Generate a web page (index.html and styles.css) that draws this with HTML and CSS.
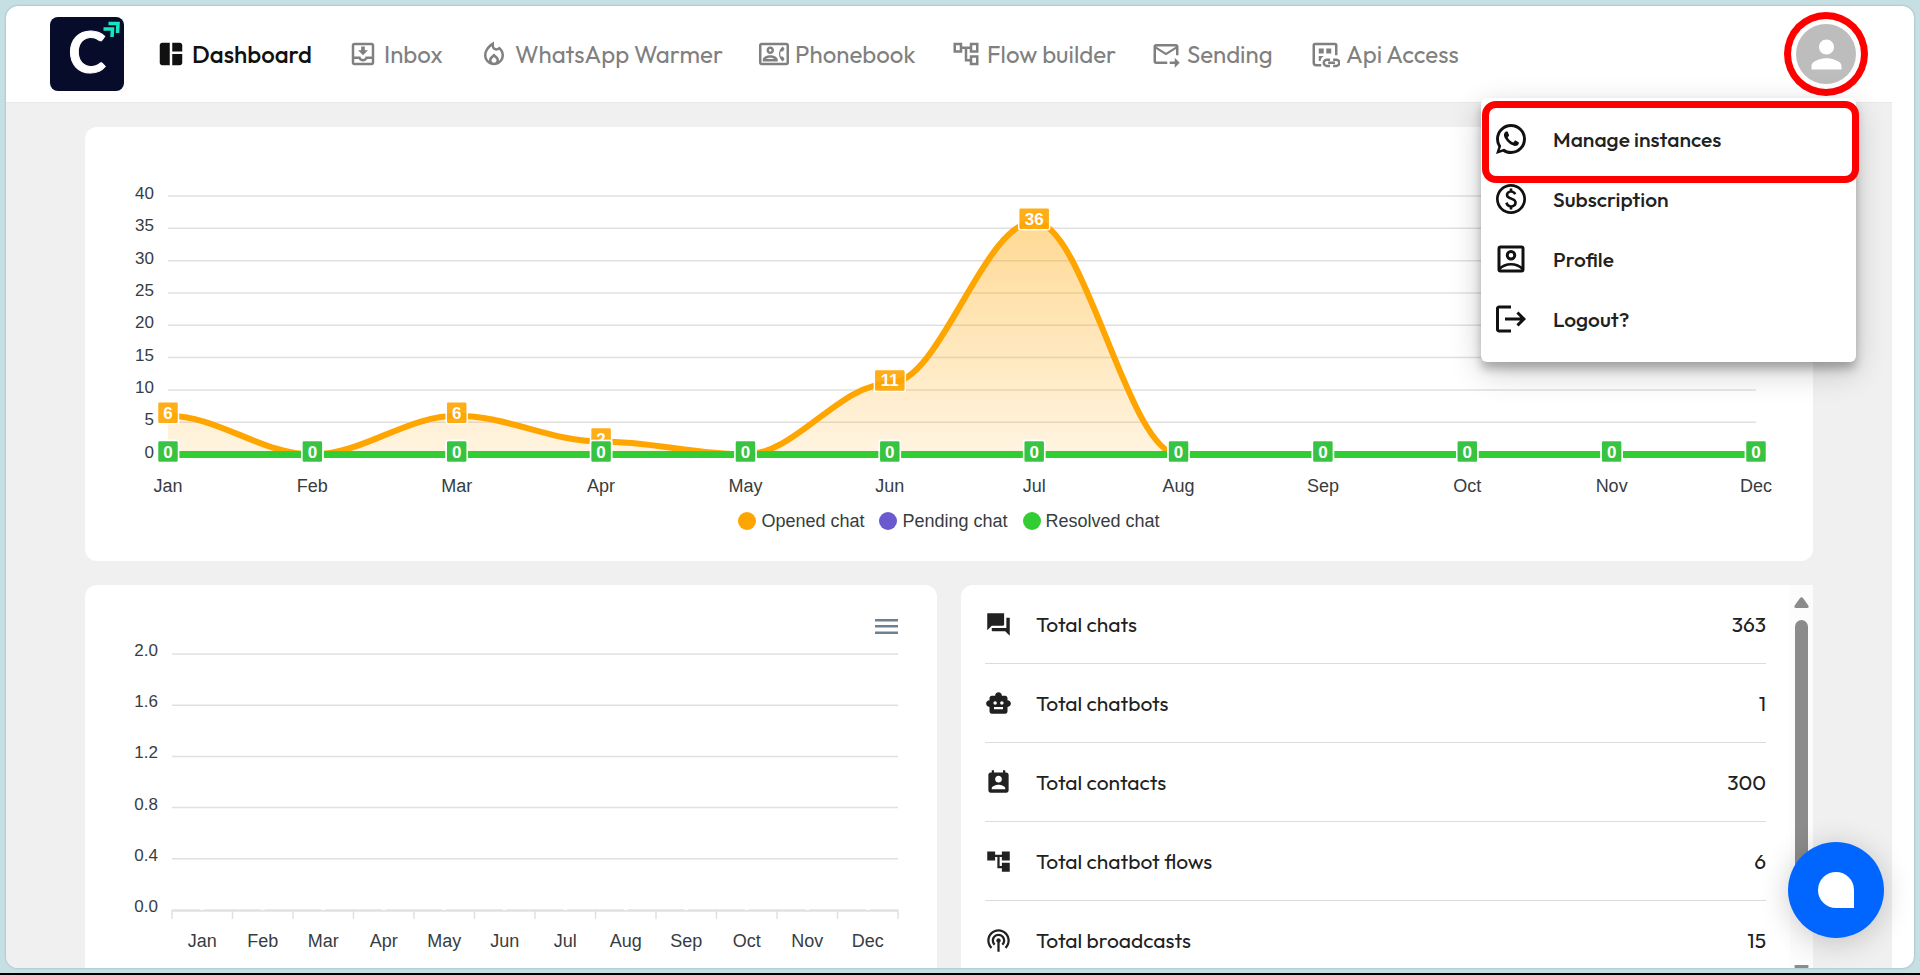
FILE: index.html
```html
<!DOCTYPE html>
<html lang="en">
<head>
<meta charset="utf-8">
<meta name="viewport" content="width=device-width, initial-scale=1">
<title>Dashboard</title>
<link rel="stylesheet" href="styles.css">
</head>
<body>
<div class="frame">
  <header class="topbar">
    <a class="logo" href="#" aria-label="Home">
      <svg viewBox="0 0 74 74" width="74" height="74">
        <rect width="74" height="74" rx="8" fill="#060c2a"/>
        <text x="37" y="56" text-anchor="middle" class="logo-letter">C</text>
        <path d="M58.500 6.500h9.500l-.5 9.500M53.500 12h9l-.5 8" fill="none" stroke="#16e5c0" stroke-width="3.600"/>
      </svg>
    </a>
    <nav class="nav">
      <a class="nav-link active" href="#"><svg class="nav-icon" viewBox="0 0 24 24"><path d="M11 21H5c-1.1 0-2-.9-2-2V5c0-1.1.9-2 2-2h6v18zm2 0h6c1.100 0 2-.9 2-2v-7h-8v9zm8-11V5c0-1.100-.9-2-2-2h-6v7h8z"/></svg>Dashboard</a>
      <a class="nav-link" href="#"><svg class="nav-icon" viewBox="0 0 24 24"><path d="M16 9h-2.550V6h-2.900v3H8l4 4zm3-6H4.990C3.880 3 3 3.900 3 5v14c0 1.100.88 2 1.990 2H19c1.100 0 2-.9 2-2V5c0-1.100-.9-2-2-2zm0 16H5v-3h3.560c.69 1.190 1.970 2 3.450 2s2.750-.81 3.450-2H19v3zm0-5h-4.990c0 1.100-.9 2-2 2s-2-.9-2-2H5V5h14v9z"/></svg>Inbox</a>
      <a class="nav-link" href="#"><svg class="nav-icon" viewBox="0 0 24 24"><path d="M16 6l-.44.55c-.42.52-.98.75-1.540.75C13 7.300 12 6.520 12 5.300V2S4 6 4 13c0 4.420 3.580 8 8 8s8-3.580 8-8c0-2.960-1.610-5.620-4-7zm-4 13c-1.100 0-2-.87-2-1.940 0-.51.2-.99.58-1.360L12 14.300l1.430 1.400c.37.37.57.85.57 1.360 0 1.070-.9 1.940-2 1.940zm3.960-1.500c.04-.36.22-1.890-1.130-3.220L12 11.500l-2.830 2.780C7.810 15.620 8 17.160 8.040 17.500 6.790 16.400 6 14.790 6 13c0-3.160 2.130-5.650 4.030-7.250.23 1.990 1.930 3.550 3.990 3.550.78 0 1.540-.23 2.180-.66C17.340 9.780 18 11.350 18 13c0 1.790-.79 3.400-2.040 4.500z"/></svg>WhatsApp Warmer</a>
      <a class="nav-link" href="#"><svg class="nav-icon" viewBox="0 0 24 24"><path d="M22 3H2C.9 3 0 3.900 0 5v14c0 1.100.9 2 2 2h20c1.100 0 1.990-.9 1.990-2L24 5c0-1.100-.9-2-2-2zm0 16H2V5h20v14zM19.010 18 20.500 16.010 19.010 14.020h-1.640C17.130 13.300 17 12.660 17 12s.13-1.350.37-2h1.640l1.500-1.990L19.010 6c-1.310.98-2.280 2.370-2.730 3.990-.18.64-.28 1.310-.28 2.010s.1 1.370.28 2.010c.45 1.610 1.420 3.010 2.730 3.990zM9 12c1.650 0 3-1.350 3-3s-1.350-3-3-3-3 1.350-3 3 1.350 3 3 3zm0-4c.55 0 1 .45 1 1s-.45 1-1 1-1-.45-1-1 .45-1 1-1zm6 8.590c0-2.500-3.970-3.580-6-3.580s-6 1.080-6 3.580V18h12v-1.410zM5.480 16c.74-.5 2.220-1 3.520-1 1.300 0 2.770.49 3.520 1H5.480z"/></svg>Phonebook</a>
      <a class="nav-link" href="#"><svg class="nav-icon" viewBox="0 0 24 24"><path d="M22 11V3h-7v3H9V3H2v8h7V8h2v10h4v3h7v-8h-7v3h-2V8h2v3h7zM7 9H4V5h3v4zm10 6h3v4h-3v-4zm0-10h3v4h-3V5z"/></svg>Flow builder</a>
      <a class="nav-link" href="#"><svg class="nav-icon" viewBox="0 0 24 24"><path d="M20 4H4c-1.100 0-1.990.9-1.990 2L2 18c0 1.100.9 2 2 2h9v-2H4V8l8 5 8-5v5h2V6c0-1.100-.9-2-2-2zm-8 7L4 6h16l-8 5zm7 4 4 4-4 4v-3h-4v-2h4v-3z"/></svg>Sending</a>
      <a class="nav-link" href="#"><svg class="nav-icon" viewBox="0 0 24 24"><g fill="none" stroke="currentColor" stroke-width="2"><path d="M9 21H5a2 2 0 0 1-2-2V5a1 1 0 0 1 1-1h16a1 1 0 0 1 1 1v8"/><path d="M16 16.500h-2.500a2.500 2.500 0 0 0 0 5H16M18.500 16.500H21a2.500 2.500 0 0 1 0 5h-2.500M14.500 19h5.500"/></g><path d="M7 7.500h4V11.500H7zM13 7.500h4V11.500h-4zM7 13.500h4c-1.500 1-2.500 2.200-2.500 4H7z"/></svg>Api Access</a>
    </nav>
    <div class="account">
      <button class="avatar" type="button" aria-label="Account menu"><svg viewBox="0 0 24 24" width="45" height="45"><path d="M12 12c2.210 0 4-1.790 4-4s-1.790-4-4-4-4 1.790-4 4 1.790 4 4 4zm0 2c-2.670 0-8 1.340-8 4v2h16v-2c0-2.660-5.330-4-8-4z"/></svg></button>
      <div class="menu">
        <button class="menu-item" type="button"><svg class="menu-icon" viewBox="0 0 24 24"><path d="M16.750 13.960c.25.13.41.2.46.3.06.11.04.61-.21 1.180-.2.56-1.240 1.100-1.700 1.120-.46.02-.47.36-2.960-.73-2.490-1.090-3.990-3.750-4.110-3.920-.12-.17-.96-1.380-.92-2.610.05-1.220.69-1.800.95-2.040.24-.26.51-.29.68-.26h.47c.15 0 .36-.06.55.45l.69 1.870c.06.13.1.28.01.44l-.27.41-.39.42c-.12.12-.26.25-.12.5.12.26.62 1.090 1.320 1.780.91.88 1.710 1.170 1.950 1.300.24.14.39.12.54-.04l.81-.94c.19-.25.35-.19.58-.11l1.670.88M12 2a10 10 0 0 1 10 10 10 10 0 0 1-10 10c-1.970 0-3.800-.57-5.350-1.550L2 22l1.550-4.650A9.969 9.969 0 0 1 2 12 10 10 0 0 1 12 2m0 2a8 8 0 0 0-8 8c0 1.720.54 3.310 1.460 4.610L4.500 19.500l2.890-.96A7.950 7.950 0 0 0 12 20a8 8 0 0 0 8-8 8 8 0 0 0-8-8z"/></svg>Manage instances</button>
        <button class="menu-item" type="button"><svg class="menu-icon" viewBox="0 0 24 24"><path d="M12 2C6.480 2 2 6.480 2 12s4.480 10 10 10 10-4.480 10-10S17.520 2 12 2zm0 18.200c-4.500 0-8.200-3.700-8.200-8.200S7.500 3.800 12 3.800s8.200 3.700 8.200 8.200-3.700 8.200-8.200 8.200zm.89-9.100c-1.780-.59-2.640-.96-2.640-1.900 0-1.020 1.110-1.390 1.810-1.390 1.310 0 1.790.99 1.900 1.340l1.580-.67c-.15-.44-.82-1.910-2.660-2.230V5h-1.750v1.260c-2.600.56-2.620 2.850-2.620 2.960 0 2.270 2.250 2.910 3.350 3.310 1.580.56 2.280 1.070 2.280 2.030 0 1.130-1.050 1.610-1.980 1.610-1.820 0-2.340-1.870-2.400-2.090l-1.660.67c.63 2.190 2.280 2.780 3.020 2.960V19h1.750v-1.240c.52-.09 3.020-.59 3.020-3.220.01-1.390-.6-2.610-3-3.440z"/></svg>Subscription</button>
        <button class="menu-item" type="button"><svg class="menu-icon" viewBox="0 0 24 24"><g fill="none" stroke="currentColor" stroke-width="2"><rect x="4" y="4" width="16" height="16" rx="1"/><circle cx="12" cy="9.500" r="2.500"/><path d="M4 18.800c4.500-4.400 11.500-4.400 16 0" stroke-width="1.800"/></g></svg>Profile</button>
        <button class="menu-item" type="button"><svg class="menu-icon" viewBox="0 0 24 24"><path d="M17 7l-1.410 1.410L18.170 11H8v2h10.170l-2.580 2.580L17 17l5-5zM4 5h8V3H4c-1.100 0-2 .9-2 2v14c0 1.100.9 2 2 2h8v-2H4V5z"/></svg>Logout?</button>
      </div>
    </div>
  </header>

  <main class="content">
    <section class="card chats-card">
      <svg id="chats-chart" class="chart" viewBox="0 0 1728 376" role="img" aria-label="Chats by month"></svg>
      <ul class="legend">
        <li class="legend-item"><span class="dot opened"></span>Opened chat</li>
        <li class="legend-item"><span class="dot pending"></span>Pending chat</li>
        <li class="legend-item"><span class="dot resolved"></span>Resolved chat</li>
      </ul>
    </section>

    <div class="columns">
      <section class="card">
        <div class="chart-tools">
          <button class="chart-menu" type="button" aria-label="Chart menu"><svg viewBox="0 0 23 15" width="23" height="15"><path d="M0 0h23v2.500H0zM0 6h23v2.500H0zM0 12.500h23V15H0z"/></svg></button>
        </div>
        <svg id="flow-chart" class="chart" viewBox="0 0 852 330" role="img" aria-label="Monthly totals"></svg>
      </section>

      <section class="card stats-card">
        <ul class="stats">
          <li class="stat"><svg class="stat-icon" viewBox="0 0 24 24"><path d="M22 6h-3v9H6v2c0 .55.45 1 1 1h11l4 4V6zm-5 6V2H2v15l4-4h10c.55 0 1-.45 1-1z"/></svg><span>Total chats</span><span class="stat-value">363</span></li>
          <li class="stat"><svg class="stat-icon" viewBox="0 0 24 24"><path d="M20 9V7c0-1.100-.9-2-2-2h-3c0-1.660-1.340-3-3-3S9 3.340 9 5H6c-1.100 0-2 .9-2 2v2c-1.660 0-3 1.340-3 3s1.340 3 3 3v4c0 1.100.9 2 2 2h12c1.100 0 2-.9 2-2v-4c1.660 0 3-1.340 3-3s-1.340-3-3-3zM7.500 11.500c0-.83.67-1.500 1.500-1.500s1.500.67 1.500 1.500S9.830 13 9 13s-1.500-.67-1.500-1.500zM16 17H8v-2h8v2zm-1-4c-.83 0-1.500-.67-1.500-1.500S14.170 10 15 10s1.500.67 1.500 1.500S15.830 13 15 13z"/></svg><span>Total chatbots</span><span class="stat-value">1</span></li>
          <li class="stat"><svg class="stat-icon" viewBox="0 0 24 24"><path d="M19 3h-1V1h-2v2H8V1H6v2H5c-1.110 0-2 .9-2 2v14c0 1.100.89 2 2 2h14c1.100 0 2-.9 2-2V5c0-1.100-.9-2-2-2zm-7 3c1.660 0 3 1.340 3 3s-1.340 3-3 3-3-1.340-3-3 1.340-3 3-3zm6 12H6v-1c0-2 4-3.100 6-3.100s6 1.100 6 3.100v1z"/></svg><span>Total contacts</span><span class="stat-value">300</span></li>
          <li class="stat"><svg class="stat-icon" viewBox="0 0 24 24"><path d="M22 11V3h-7v3H9V3H2v8h7V8h2v10h4v3h7v-8h-7v3h-2V8h2v3z"/></svg><span>Total chatbot flows</span><span class="stat-value">6</span></li>
          <li class="stat"><svg class="stat-icon" viewBox="0 0 24 24"><path d="M14 12c0 .74-.4 1.380-1 1.720V22h-2v-8.280c-.6-.35-1-.98-1-1.720 0-1.100.9-2 2-2s2 .9 2 2zm-2-6c-3.310 0-6 2.690-6 6 0 1.740.75 3.310 1.940 4.400l1.420-1.420C8.530 14.250 8 13.190 8 12c0-2.210 1.790-4 4-4s4 1.790 4 4c0 1.190-.53 2.250-1.360 2.980l1.420 1.420C17.250 15.310 18 13.740 18 12c0-3.310-2.690-6-6-6zm0-4C6.480 2 2 6.480 2 12c0 2.850 1.200 5.410 3.110 7.240l1.420-1.420C4.980 16.360 4 14.290 4 12c0-4.410 3.590-8 8-8s8 3.590 8 8c0 2.290-.98 4.360-2.530 5.820l1.420 1.420C20.800 17.410 22 14.850 22 12c0-5.520-4.480-10-10-10z"/></svg><span>Total broadcasts</span><span class="stat-value">15</span></li>
        </ul>
        <div class="scrollbar" aria-hidden="true">
          <svg viewBox="0 0 15 11" width="15" height="11"><path d="M6 1Q7.500-.6 9 1l5.300 7.500Q15.400 11 13 11H2Q-.4 11 .7 8.500z"/></svg>
          <div class="thumb"></div>
          <svg viewBox="0 0 15 11" width="15" height="11"><path d="M6 10Q7.500 11.600 9 10l5.300-7.500Q15.400 0 13 0H2Q-.4 0 .7 2.500z"/></svg>
        </div>
      </section>
    </div>
  </main>

  <button class="chat-bubble" type="button" aria-label="Open chat"><span class="chat-glyph"></span></button>
</div>
<script src="charts.js"></script>
</body>
</html>
```

FILE: styles.css
```css
* { box-sizing: border-box; }

body {
  margin: 0;
  height: 100vh;
  padding: 6px 6px 5px;
  background: #c6dfe3;
  border-bottom: 2px solid #000;
  font-family: Outfit, Lato, "Open Sans", sans-serif;
  color: #212121;
}

button { font: inherit; color: inherit; cursor: pointer; }
ul { list-style: none; margin: 0; padding: 0; }

.frame {
  position: relative;
  height: 100%;
  overflow: hidden;
  padding-right: 22px;
  background: #fff;
  border-radius: 12px;
  box-shadow: 0 0 2px rgba(60, 100, 120, .5);
}

/* Top bar */
.topbar {
  display: flex;
  align-items: center;
  height: 97px;
  padding: 0 36px 0 44px;
  border-bottom: 1px solid #e8e8e8;
}
.logo { display: flex; margin-right: 32px; }
.logo-letter { font: 700 57px Lato, sans-serif; fill: #fff; stroke: #fff; }
.nav {
  display: grid;
  grid-template-columns: 192px 131px 280px 192px 200px 159px auto;
  flex: 1;
  justify-content: start;
}
.nav-link {
  display: flex;
  align-items: center;
  gap: 6px;
  font-size: 24px;
  color: #808080;
  white-space: nowrap;
  text-decoration: none;
}
.nav-link.active { color: #111; font-weight: 500; }
.nav-icon { width: 30px; height: 30px; fill: currentColor; flex: none; }

.account { position: relative; }
.avatar {
  display: flex;
  align-items: center;
  justify-content: center;
  width: 60px;
  height: 60px;
  padding: 0;
  border: 0;
  border-radius: 50%;
  background: #bdbdbd;
  box-shadow: 0 0 0 5px #fff, 0 0 0 12px #f00;
}
.avatar svg { fill: #fff; }

.menu {
  position: absolute;
  z-index: 2;
  top: calc(100% + 14px);
  right: 0;
  width: 375px;
  padding: 11px 0 13px;
  background: #fff;
  border-radius: 6px;
  box-shadow: 0 7px 10px rgba(0, 0, 0, .25), 0 10px 32px rgba(0, 0, 0, .2);
}
.menu-item {
  display: flex;
  align-items: center;
  gap: 24px;
  width: 100%;
  height: 60px;
  padding: 0 12px;
  border: 0;
  background: none;
  font-size: 21px;
  font-weight: 500;
}
.menu-icon { width: 36px; height: 36px; fill: #111; color: #111; }
/* highlight ring around the first entry */
.menu-item:first-child { position: relative; }
.menu-item:first-child::after {
  content: "";
  position: absolute;
  inset: -8px -3px -14px 1px;
  border: 7px solid #f00;
  border-radius: 14px;
}

/* Content */
.content { padding: 24px 79px; background: #f0f0f0; }
.card { background: #fff; border-radius: 12px; overflow: hidden; }
.columns {
  display: grid;
  grid-template-columns: 1fr 1fr;
  gap: 24px;
  margin-top: 24px;
}

/* Charts */
.chart {
  display: block;
  width: 100%;
  height: auto;
  font-family: "Liberation Sans", Arial, sans-serif;
  fill: #373d3f;
}
.grid-line { stroke: #e0e0e0; stroke-width: 1.5; }
.tick-y { font-size: 17px; text-anchor: end; }
.tick-x { font-size: 18px; text-anchor: middle; }
.area { fill: url(#opened-fill); }
.line { fill: none; stroke-width: 6; }
.line.opened { stroke: #ffa500; }
.line.resolved { stroke: #32cd32; stroke-width: 7; }
.tag { stroke: #fff; stroke-width: 1.5; fill-opacity: .9; }
.tag.opened { fill: #ffa500; }
.tag.pending { fill: #6a5acd; }
.tag.resolved { fill: #32cd32; }
.tag-text { font-size: 17px; font-weight: 700; text-anchor: middle; fill: #fff; }

.chats-card { padding-bottom: 29px; }
.legend {
  display: flex;
  justify-content: center;
  gap: 15px;
  padding-top: 7px;
  font: 18px/22px "Liberation Sans", Arial, sans-serif;
  color: #373d3f;
}
.legend-item { display: flex; align-items: center; gap: 5px; }
.dot { width: 18px; height: 18px; border-radius: 50%; }
.dot.opened { background: #ffa500; }
.dot.pending { background: #6a5acd; }
.dot.resolved { background: #32cd32; }

.chart-tools { display: flex; justify-content: flex-end; padding: 34px 39px 6px 0; }
.chart-menu { display: flex; padding: 0; border: 0; background: none; }
.chart-menu svg { fill: #6e8192; }

/* Totals */
.stats-card {
  display: flex;
  border-top-right-radius: 0;
}
.stats { flex: 1; padding: 0 24px; }
.stat {
  display: flex;
  align-items: center;
  gap: 24px;
  height: 79px;
  font-size: 21px;
  border-bottom: 1px solid #dcdcdc;
}
.stat-icon { width: 27px; height: 27px; fill: #212121; }
.stat-value { margin-left: auto; }

.scrollbar {
  display: flex;
  flex-direction: column;
  align-items: center;
  width: 23px;
  padding: 12px 0 4px;
  background: #fcfcfc;
}
.scrollbar svg { fill: #8b8b8b; }
.thumb {
  flex: 0 0 270px;
  width: 13px;
  margin: 12px 0 auto;
  border-radius: 7px;
  background: #8b8b8b;
}

.chat-bubble {
  position: absolute;
  z-index: 3;
  right: 30px;
  bottom: 30px;
  display: flex;
  align-items: center;
  justify-content: center;
  width: 96px;
  height: 96px;
  padding: 0;
  border: 0;
  border-radius: 50%;
  background: #06f;
  box-shadow: 0 4px 30px rgba(0, 0, 0, .2);
}
.chat-glyph {
  width: 36px;
  height: 36px;
  background: #fff;
  border-radius: 50% 50% 0 50%;
}
```

FILE: charts.js
```js
const MONTHS = ['Jan', 'Feb', 'Mar', 'Apr', 'May', 'Jun', 'Jul', 'Aug', 'Sep', 'Oct', 'Nov', 'Dec'];

function drawChats() {
  const opened = [6, 0, 6, 2, 0, 11, 36, 0, 0, 0, 0, 0];
  const left = 83, right = 1671, top = 69, base = 327.5;
  const step = (right - left) / 11;
  const px = i => left + i * step;
  const py = v => base - v * (base - top) / 40;
  let out = '<defs><linearGradient id="opened-fill" x1="0" y1="0" x2="0" y2="1">' +
    '<stop offset="0" stop-color="#ffa500" stop-opacity=".42"/>' +
    '<stop offset="1" stop-color="#ffa500" stop-opacity=".12"/></linearGradient></defs>';
  for (let v = 0; v <= 40; v += 5) {
    out += `<line class="grid-line" x1="${left}" x2="${right}" y1="${py(v)}" y2="${py(v)}"/>`;
    out += `<text class="tick-y" x="69" y="${py(v) + 3}">${v}</text>`;
  }
  let curve = `M${px(0)} ${py(opened[0])}`;
  for (let i = 1; i < 12; i++) {
    const bend = step * 0.35;
    curve += `C${px(i - 1) + bend} ${py(opened[i - 1])} ${px(i) - bend} ${py(opened[i])} ${px(i)} ${py(opened[i])}`;
  }
  out += `<path class="area" d="${curve}V${base}H${left}Z"/><path class="line opened" d="${curve}"/>`;
  out += `<line class="line resolved" x1="${left}" x2="${right}" y1="${base}" y2="${base}"/>`;
  const box = (i, v, kind) => {
    const w = v > 9 ? 31 : 21;
    return `<rect class="tag ${kind}" x="${px(i) - w / 2}" y="${py(v) - 14}" width="${w}" height="22" rx="2"/>`;
  };
  const label = (i, v) => `<text class="tag-text" x="${px(i)}" y="${py(v) + 3}">${v}</text>`;
  opened.forEach((v, i) => {
    if (v > 0) out += box(i, v, 'opened') + label(i, v);
  });
  MONTHS.forEach((m, i) => {
    out += box(i, 0, 'pending') + box(i, 0, 'resolved') + label(i, 0);
    out += `<text class="tick-x" x="${px(i)}" y="365">${m}</text>`;
  });
  document.getElementById('chats-chart').innerHTML = out;
}

function drawFlow() {
  const left = 87, right = 813, top = 14, base = 270;
  const step = (right - left) / 12;
  let out = '';
  for (let i = 0; i <= 5; i++) {
    const y = base - i * (base - top) / 5;
    out += `<line class="grid-line" x1="${left}" x2="${right}" y1="${y}" y2="${y}"/>`;
    out += `<text class="tick-y" x="73" y="${y + 2}">${(i * 0.4).toFixed(1)}</text>`;
  }
  out += `<line class="grid-line" x1="${left}" x2="${right}" y1="${base + 1}" y2="${base + 1}"/>`;
  for (let i = 0; i <= 12; i++) {
    const x = left + i * step;
    out += `<line class="grid-line" x1="${x}" x2="${x}" y1="${base}" y2="${base + 9}"/>`;
    if (i < 12) {
      out += `<rect x="${x + step / 2 - 2}" y="${base - 1}" width="4" height="1" fill="#fff"/>`;
      out += `<text class="tick-x" x="${x + step / 2}" y="${base + 37}">${MONTHS[i]}</text>`;
    }
  }
  document.getElementById('flow-chart').innerHTML = out;
}

drawChats();
drawFlow();
```
